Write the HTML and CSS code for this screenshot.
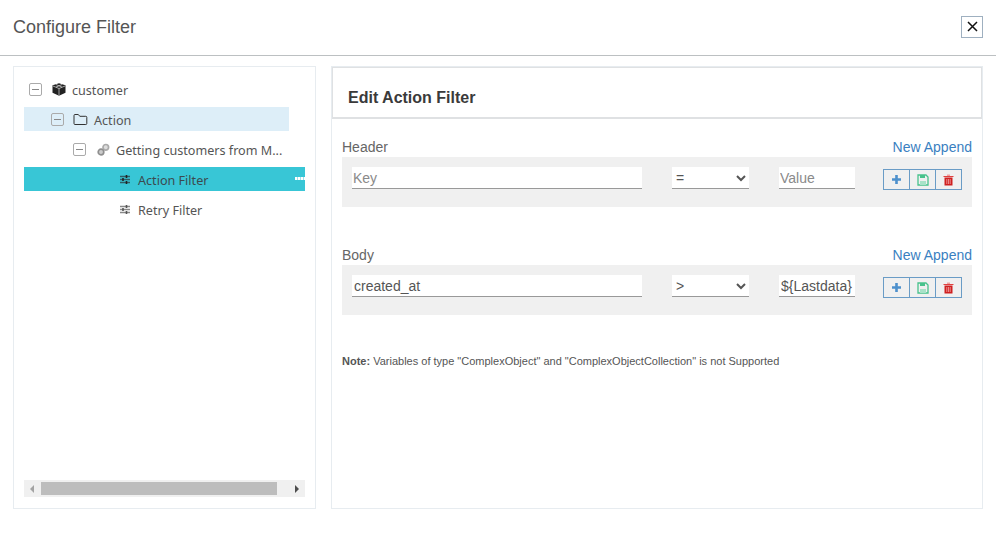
FILE: index.html
```html
<!DOCTYPE html>
<html lang="en">
<head>
<meta charset="utf-8">
<title>Configure Filter</title>
<link rel="stylesheet" href="styles.css">
</head>
<body>
<header class="modal-header">
  <h1 class="modal-title">Configure Filter</h1>
  <button class="close-btn" type="button" aria-label="Close">
    <svg width="11" height="11" viewBox="0 0 11 11"><path d="M1 1l9 9M10 1l-9 9" stroke="#111" stroke-width="1.5" fill="none"/></svg>
  </button>
</header>
<main class="modal-body">
  <aside class="tree-panel">
    <ul class="tree">
      <li class="node">
        <span class="toggle"></span>
        <svg class="icon cube" width="14" height="13" viewBox="0 0 14 13"><path d="M7 .3l3 1 3.500 1v7.400L7 12.800.5 9.700V2.300l3.500-1z" fill="#222"/><path d="M1 3l6 2.500L13 3M7 5.500v7M4 1.500l6 2.600M10 1.500L4 4.100" stroke="#ddd" stroke-width=".7" fill="none"/></svg>
        <span class="label">customer</span>
      </li>
      <li class="node level-1 is-open">
        <span class="toggle"></span>
        <svg class="icon" width="15" height="13" viewBox="0 0 15 13"><path d="M1 2.500a1 1 0 0 1 1-1h3.300l1.500 1.800h6a1 1 0 0 1 1 1v6.200a1 1 0 0 1-1 1H2a1 1 0 0 1-1-1z" fill="none" stroke="#333" stroke-width="1"/></svg>
        <span class="label">Action</span>
      </li>
      <li class="node level-2">
        <span class="toggle"></span>
        <svg class="icon link" width="13" height="13" viewBox="0 0 13 13"><circle cx="8.800" cy="4.300" r="2.800" fill="#ddd" stroke="#aaa" stroke-width="1.700"/><circle cx="4" cy="9" r="2.800" fill="#ccc" stroke="#8f8f8f" stroke-width="1.700"/></svg>
        <span class="label">Getting customers from M...</span>
      </li>
      <li class="node level-3 is-selected">
        <svg class="icon" width="10" height="9" viewBox="0 0 10 9"><path d="M0 1.500h10M0 4.500h10M0 7.500h10" stroke="#2f5c66" stroke-width="1.300"/><path d="M6.500 0v3M3 3v3M6.500 6v3" stroke="#222" stroke-width="1.600"/></svg>
        <span class="label">Action Filter</span>
        <span class="dots"></span>
      </li>
      <li class="node level-3">
        <svg class="icon" width="10" height="9" viewBox="0 0 10 9"><path d="M0 1.500h10M0 4.500h10M0 7.500h10" stroke="#888" stroke-width="1.300"/><path d="M6.500 0v3M3 3v3M6.500 6v3" stroke="#555" stroke-width="1.600"/></svg>
        <span class="label">Retry Filter</span>
      </li>
    </ul>
    <div class="scrollbar">
      <span class="arrow arrow-left"></span>
      <span class="thumb"></span>
      <span class="arrow arrow-right"></span>
    </div>
  </aside>
  <section class="edit-panel">
    <h2 class="edit-title">Edit Action Filter</h2>
    <div class="filter-group">
      <div class="group-head"><span class="group-name">Header</span><a href="#" class="append">New Append</a></div>
      <div class="filter-row">
        <input class="field key" type="text" placeholder="Key">
        <select class="field op"><option>=</option></select>
        <input class="field val" type="text" placeholder="Value">
        <div class="btn-group">
          <button type="button" class="btn"><svg width="11" height="11" viewBox="0 0 11 11"><path d="M5.500 1v9M1 5.500h9" stroke="#4d90cc" stroke-width="2.600"/></svg></button>
          <button type="button" class="btn"><svg width="12" height="12" viewBox="0 0 12 12"><path d="M1 1h8l2 2v8H1z" fill="none" stroke="#48c28c" stroke-width="1.300"/><path d="M3 1h5v3H3z" fill="#48c28c"/><path d="M3 7h6v4H3z" fill="#a8e2c8"/></svg></button>
          <button type="button" class="btn"><svg width="11" height="12" viewBox="0 0 11 12"><path d="M4 .5h3v1.500H4z" fill="#f0a0a0"/><path d="M.5 2.500h10" stroke="#e0403f" stroke-width="1"/><path d="M1.500 3.500h8V11.500h-8z" fill="#cf2020"/><path d="M3.800 5v5M5.500 5v5M7.200 5v5" stroke="#f3a5a5" stroke-width=".8"/></svg></button>
        </div>
      </div>
    </div>
    <div class="filter-group second">
      <div class="group-head"><span class="group-name">Body</span><a href="#" class="append">New Append</a></div>
      <div class="filter-row">
        <input class="field key" type="text" value="created_at">
        <select class="field op"><option>&gt;</option></select>
        <input class="field val" type="text" value="${Lastdata}">
        <div class="btn-group">
          <button type="button" class="btn"><svg width="11" height="11" viewBox="0 0 11 11"><path d="M5.500 1v9M1 5.500h9" stroke="#4d90cc" stroke-width="2.600"/></svg></button>
          <button type="button" class="btn"><svg width="12" height="12" viewBox="0 0 12 12"><path d="M1 1h8l2 2v8H1z" fill="none" stroke="#48c28c" stroke-width="1.300"/><path d="M3 1h5v3H3z" fill="#48c28c"/><path d="M3 7h6v4H3z" fill="#a8e2c8"/></svg></button>
          <button type="button" class="btn"><svg width="11" height="12" viewBox="0 0 11 12"><path d="M4 .5h3v1.500H4z" fill="#f0a0a0"/><path d="M.5 2.500h10" stroke="#e0403f" stroke-width="1"/><path d="M1.500 3.500h8V11.500h-8z" fill="#cf2020"/><path d="M3.800 5v5M5.500 5v5M7.200 5v5" stroke="#f3a5a5" stroke-width=".8"/></svg></button>
        </div>
      </div>
    </div>
    <p class="note"><strong>Note:</strong> Variables of type "ComplexObject" and "ComplexObjectCollection" is not Supported</p>
  </section>
</main>
</body>
</html>
```

FILE: styles.css
```css
* { box-sizing: border-box; }
html, body { margin: 0; height: 100%; background: #fff; overflow: hidden; }
body { font-family: "Liberation Sans", Arial, sans-serif; color: #333; }

.modal-header {
  height: 56px;
  border-bottom: 1px solid #bcc0c2;
  display: flex;
  align-items: center;
  justify-content: space-between;
  padding: 0 13px;
}
.modal-title { margin: 0; font-size: 18px; font-weight: 400; color: #555; }
.close-btn {
  width: 22px;
  height: 22px;
  padding: 0;
  margin-top: -2px;
  background: #fff;
  border: 1px solid #9fb0c0;
  display: flex;
  align-items: center;
  justify-content: center;
}

.modal-body { display: flex; gap: 15px; padding: 10px 13px 0; height: 453px; }

.tree-panel {
  width: 303px;
  border: 1px solid #e7ecf0;
  padding: 10px 10px 11px;
  display: flex;
  flex-direction: column;
  justify-content: space-between;
}
.tree { list-style: none; margin: 0; padding: 0; display: flex; flex-direction: column; gap: 6px; font-family: "Noto Sans", sans-serif; font-size: 12.600px; color: #555; }
.node { height: 24px; display: flex; align-items: center; padding-left: 5px; position: relative; white-space: nowrap; }
.label { padding-top: 2px; }
.level-1 { padding-left: 27px; width: 265px; }
.level-2 { padding-left: 49px; width: 265px; }
.level-3 { padding-left: 96px; }
.is-open { background: #ddeef8; }
.is-selected { background: #38c6d6; color: #3c4a4f; }
.toggle {
  width: 13px;
  height: 13px;
  border: 1px solid #aaa;
  border-radius: 2px;
  margin-right: 10px;
  position: relative;
  flex: none;
}
.toggle::after { content: ""; position: absolute; left: 2px; right: 2px; top: 5px; height: 1px; background: #888; }
.icon { flex: none; margin-right: 6px; }
.level-3 .icon { margin-right: 8px; }
.level-1 .icon { margin-right: 6px; margin-left: -1px; }
.level-2 .icon { margin-left: 1px; margin-right: 6px; }
.dots {
  position: absolute;
  right: 0;
  top: 10px;
  width: 10px;
  height: 3px;
  background: repeating-linear-gradient(90deg, #fff 0 2px, #9fe3ea 2px 3px);
}

.scrollbar {
  height: 17px;
  background: #f0f0f0;
  display: flex;
  align-items: center;
  padding: 0 6px;
  justify-content: space-between;
}
.arrow { width: 0; height: 0; border-top: 4px solid transparent; border-bottom: 4px solid transparent; }
.arrow-left { border-right: 4px solid #a3a3a3; }
.arrow-right { border-left: 4px solid #4d4d4d; }
.thumb { width: 236px; height: 13px; background: #bdbdbd; margin: 0 auto 0 7px; }

.edit-panel { flex: 1; border: 1px solid #e7ecf0; display: flex; flex-direction: column; padding: 0 10px; min-width: 0; }
.edit-title {
  margin: 0 -10px;
  height: 52px;
  border: 1px solid #dfe1e3;
  border-width: 1px 1px 2px 1px;
  padding: 20px 0 0 15px;
  font-size: 16px;
  font-weight: 700;
  line-height: 20px;
  color: #3a3a3a;
}
.filter-group { margin-top: 19px; }
.filter-group.second { margin-top: 39px; }
.group-head { display: flex; justify-content: space-between; align-items: center; height: 19px; font-size: 14px; color: #666; line-height: 19px; }
.append { color: #3a7fc1; text-decoration: none; }
.filter-row { height: 50px; background: #f0f0f0; display: flex; align-items: flex-start; padding: 10px 10px 0; }
.field {
  height: 22px;
  border: 0;
  border-bottom: 1px solid #999;
  border-radius: 0;
  background: #fff;
  padding: 0 2px;
  font-family: "Liberation Sans", Arial, sans-serif;
  font-size: 14px;
  color: #555;
  outline: none;
}
.field:placeholder-shown { padding-left: 1px; }
.field::placeholder { color: #8a8a8a; }
.key { width: 290px; }
.op { width: 77px; margin-left: 30px; padding: 0; }
.val { width: 76px; margin-left: 30px; }
.btn-group { display: flex; margin: 2px 0 0 28px; }
.btn {
  width: 27px;
  height: 21px;
  padding: 0;
  background: transparent;
  border: 1px solid #6a9cc6;
  margin-left: -1px;
  display: flex;
  align-items: center;
  justify-content: center;
}
.btn:first-child { margin-left: 0; }
.note { margin: 39px 0 0; font-size: 11px; line-height: 14px; color: #555; }
.note strong { color: #555; }
```
